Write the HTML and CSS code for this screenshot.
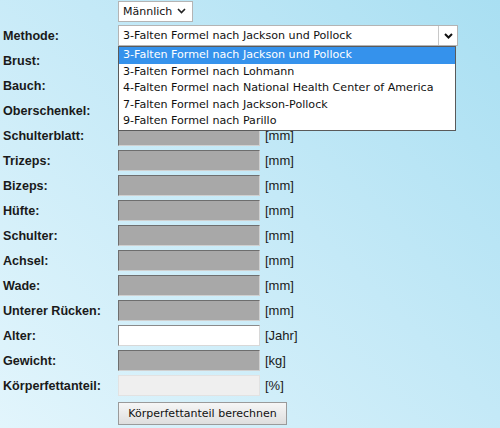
FILE: index.html
```html
<!DOCTYPE html>
<html lang="de">
<head>
<meta charset="utf-8">
<link rel="stylesheet" href="styles.css">
</head>
<body>
<form class="form">
  <div class="row first">
    <span class="label"></span>
    <div class="select small">Männlich<span class="chev"><svg width="9" height="6" viewBox="0 0 9 6"><path d="M1 1l3.5 3.5L8 1" fill="none" stroke="#222" stroke-width="1.6"/></svg></span></div>
  </div>
  <div class="row method">
    <span class="label">Methode:</span>
    <div class="select wide">3-Falten Formel nach Jackson und Pollock<span class="arrowbox"><svg width="9" height="6" viewBox="0 0 9 6"><path d="M1 1l3.5 3.5L8 1" fill="none" stroke="#111" stroke-width="2"/></svg></span></div>
    <ul class="dropdown">
      <li class="active">3-Falten Formel nach Jackson und Pollock</li>
      <li>3-Falten Formel nach Lohmann</li>
      <li>4-Falten Formel nach National Health Center of America</li>
      <li>7-Falten Formel nach Jackson-Pollock</li>
      <li>9-Falten Formel nach Parillo</li>
    </ul>
  </div>
  <div class="row covered"><span class="label">Brust:</span><span class="input gray"></span><span class="unit">[mm]</span></div>
  <div class="row covered"><span class="label">Bauch:</span><span class="input gray"></span><span class="unit">[mm]</span></div>
  <div class="row covered"><span class="label">Oberschenkel:</span><span class="input gray"></span><span class="unit">[mm]</span></div>
  <div class="row"><span class="label">Schulterblatt:</span><span class="input gray"></span><span class="unit">[mm]</span></div>
  <div class="row"><span class="label">Trizeps:</span><span class="input gray"></span><span class="unit">[mm]</span></div>
  <div class="row"><span class="label">Bizeps:</span><span class="input gray"></span><span class="unit">[mm]</span></div>
  <div class="row"><span class="label">Hüfte:</span><span class="input gray"></span><span class="unit">[mm]</span></div>
  <div class="row"><span class="label">Schulter:</span><span class="input gray"></span><span class="unit">[mm]</span></div>
  <div class="row"><span class="label">Achsel:</span><span class="input gray"></span><span class="unit">[mm]</span></div>
  <div class="row"><span class="label">Wade:</span><span class="input gray"></span><span class="unit">[mm]</span></div>
  <div class="row"><span class="label">Unterer Rücken:</span><span class="input gray"></span><span class="unit">[mm]</span></div>
  <div class="row"><span class="label">Alter:</span><span class="input white"></span><span class="unit">[Jahr]</span></div>
  <div class="row"><span class="label">Gewicht:</span><span class="input gray"></span><span class="unit">[kg]</span></div>
  <div class="row"><span class="label">Körperfettanteil:</span><span class="input light"></span><span class="unit">[%]</span></div>
  <div class="row"><span class="label"></span><span class="button">Körperfettanteil berechnen</span></div>
</form>
</body>
</html>
```
FILE: styles.css
```css
html, body {
  margin: 0;
  padding: 0;
  height: 100%;
}
body {
  background: linear-gradient(225deg, #a9dff2 0%, #c4e9f7 45%, #e2f5fc 100%);
  font-family: "Liberation Sans", Arial, sans-serif;
  font-size: 13px;
  color: #111;
  overflow: hidden;
}
.form {
  display: flex;
  flex-direction: column;
  padding: 0 0 0 3px;
}
.row {
  position: relative;
  display: flex;
  align-items: center;
  height: 25px;
}
.row.first {
  height: 23px;
}
.row.covered .unit {
  visibility: hidden;
}
.label {
  width: 115px;
  flex: none;
  font-weight: bold;
  font-size: 12.6px;
  color: #1a1a1a;
}
.select {
  position: relative;
  box-sizing: border-box;
  height: 21px;
  background: #fff;
  border: 1px solid #b4b4b4;
  font-family: "DejaVu Sans", Tahoma, sans-serif;
  font-size: 11px;
  line-height: 19px;
  padding-left: 4px;
  color: #111;
}
.select.small {
  width: 75px;
}
.chev {
  position: absolute;
  right: 6px;
  top: 6px;
  line-height: 0;
}
.select.wide {
  width: 340px;
  font-size: 11.1px;
}
.arrowbox {
  position: absolute;
  right: 0;
  top: 0;
  width: 18px;
  height: 19px;
  border-left: 1px solid #c8c8c8;
  display: flex;
  align-items: center;
  justify-content: center;
}
.dropdown {
  position: absolute;
  left: 115px;
  top: 23px;
  width: 338px;
  margin: 0;
  padding: 0;
  list-style: none;
  background: #fff;
  border: 1px solid #5a5a5a;
  box-sizing: border-box;
  font-family: "DejaVu Sans", Tahoma, sans-serif;
  font-size: 11.1px;
  z-index: 2;
}
.dropdown li {
  height: 16.5px;
  line-height: 16px;
  padding-left: 4px;
  color: #111;
}
.dropdown li.active {
  background: #3592ec;
  color: #fff;
}
.input {
  box-sizing: border-box;
  width: 142px;
  height: 21px;
  border: 1px solid;
}
.input.gray {
  background: #a8a8a8;
  border-color: #6e6e6e #d0d0d0 #d0d0d0 #6e6e6e;
}
.input.white {
  background: #fff;
  border-color: #8a8a8a #d8d8d8 #d8d8d8 #8a8a8a;
}
.input.light {
  background: #efefef;
  border-color: #e2e2e2;
}
.unit {
  margin-left: 5px;
  color: #1a1a1a;
}
.button {
  box-sizing: border-box;
  margin-top: 5px;
  width: 169px;
  height: 23px;
  border: 1px solid #9a9a9a;
  background: linear-gradient(#f6f6f6, #dedede);
  font-family: "DejaVu Sans", Tahoma, sans-serif;
  font-size: 11px;
  line-height: 21px;
  text-align: center;
  color: #111;
}
```
